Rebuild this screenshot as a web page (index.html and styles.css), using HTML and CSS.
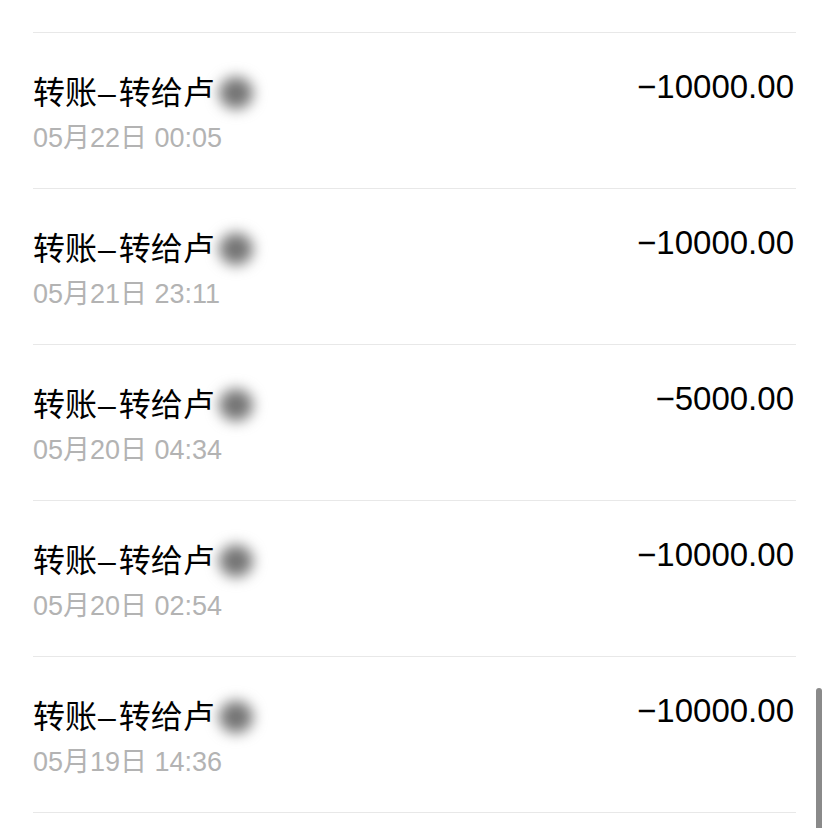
FILE: index.html
```html
<!DOCTYPE html>
<html>
<head>
    <meta charset="UTF-8">
    <meta name="viewport" content="width=device-width, initial-scale=1.0">
    <title>账单</title>
    <link rel="stylesheet" href="styles.css">
</head>
<body>
    <div class="bill-list">
        <div class="bill-item">
            <div class="bill-info">
                <div class="bill-title">转账<span class="dash">–</span>转给卢<span class="masked"></span></div>
                <div class="bill-time">05月22日 00:05</div>
            </div>
            <div class="bill-amount">−10000.00</div>
        </div>
        <div class="bill-item">
            <div class="bill-info">
                <div class="bill-title">转账<span class="dash">–</span>转给卢<span class="masked"></span></div>
                <div class="bill-time">05月21日 23:11</div>
            </div>
            <div class="bill-amount">−10000.00</div>
        </div>
        <div class="bill-item">
            <div class="bill-info">
                <div class="bill-title">转账<span class="dash">–</span>转给卢<span class="masked"></span></div>
                <div class="bill-time">05月20日 04:34</div>
            </div>
            <div class="bill-amount">−5000.00</div>
        </div>
        <div class="bill-item">
            <div class="bill-info">
                <div class="bill-title">转账<span class="dash">–</span>转给卢<span class="masked"></span></div>
                <div class="bill-time">05月20日 02:54</div>
            </div>
            <div class="bill-amount">−10000.00</div>
        </div>
        <div class="bill-item">
            <div class="bill-info">
                <div class="bill-title">转账<span class="dash">–</span>转给卢<span class="masked"></span></div>
                <div class="bill-time">05月19日 14:36</div>
            </div>
            <div class="bill-amount">−10000.00</div>
        </div>
    </div>
    <div class="scrollbar"></div>
</body>
</html>
```

FILE: styles.css
```css
body {
    margin: 0;
    background: #ffffff;
    font-family: "Liberation Sans", "Noto Sans CJK SC", sans-serif;
    color: #000000;
    overflow: hidden;
}

.bill-list {
    padding: 32px 32px 0 33px;
}

.bill-item {
    display: flex;
    justify-content: space-between;
    align-items: flex-start;
    height: 155px;
    border-top: 1px solid #e8e8e8;
}

.bill-item:last-child {
    border-bottom: 1px solid #e8e8e8;
}

.bill-info {
    padding-top: 41px;
}

.bill-title {
    font-size: 32px;
    line-height: 38px;
    display: flex;
    align-items: center;
}

.dash {
    margin: 0 3px 0 1px;
}

.masked {
    display: inline-block;
    width: 34px;
    height: 32px;
    margin-left: 4px;
    border-radius: 50%;
    background: #747474;
    filter: blur(7px);
}

.bill-time {
    margin-top: 10px;
    font-size: 27px;
    line-height: 32px;
    color: #b3b3b3;
}

.bill-amount {
    padding-top: 34px;
    font-size: 33px;
    line-height: 40px;
    margin-right: 2px;
}

.scrollbar {
    position: fixed;
    right: 6px;
    top: 688px;
    width: 6px;
    height: 160px;
    border-radius: 3px;
    background: #8a8a8a;
}
```
